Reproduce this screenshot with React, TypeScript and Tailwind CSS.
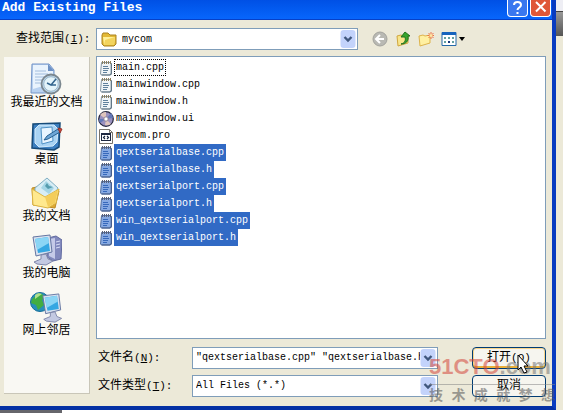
import { useState } from "react";

const mono = "font-['Liberation_Mono','Noto_Sans_CJK_SC',monospace]";

const NoteIcon = ({ selected }: { selected?: boolean }) => (
  <svg viewBox="0 0 16 16" className="w-4 h-4">
    <path d="M3.500 2.500h9l1 1v9.500L12 15H3.500l-1-1z" fill={selected ? "#86a9e2" : "#f0f5f8"} stroke={selected ? "#54709e" : "#8798a4"} />
    <path d="M13.300 3.500v10.500l-1.300 1H3.500" fill="none" stroke={selected ? "#465e8c" : "#5f7484"} strokeWidth="1.200" />
    <path d="M4.500 1v3M6.500 1v3M8.500 1v3M10.500 1v3M12.500 1v3" stroke={selected ? "#5a6178" : "#8c8060"} />
    <path d="M5 6.500h5M5 8.500h6M5 10.500h5M5 12.500h4" stroke={selected ? "#3769bb" : "#5f819d"} />
  </svg>
);

const DiscIcon = () => (
  <svg viewBox="0 0 16 16" className="w-4 h-4">
    <circle cx="8" cy="8" r="7.3" fill="#9a91bf" stroke="#22243b" strokeWidth="1.2" />
    <path d="M8 8 2 4A7 7 0 0 1 8 1zM8 8l5 5a7 7 0 0 1-6 1z" fill="#dfc4bd" />
    <path d="m8 8 5-6a7 7 0 0 1 2 5zM8 8l-6 4a7 7 0 0 1-1-4z" fill="#6378b7" />
    <circle cx="8" cy="8" r="2.2" fill="#fff" stroke="#8e8294" />
  </svg>
);

const ProIcon = () => (
  <svg viewBox="0 0 16 16" className="w-4 h-4">
    <path d="M1.5 1.5h10l3 3v11h-13z" fill="#fff" stroke="#77736b" />
    <path d="M11.500 1.500v3h3" fill="none" stroke="#77736b" />
    <path d="M3 5h10v8H3z" fill="#1d2740" />
    <path d="M4 7h8v5H4z" fill="#fff" />
    <path d="m7 8-1.500 1.500L7 11M9 8l1.500 1.500L9 11" fill="none" stroke="#17243c" strokeWidth="1.2" />
  </svg>
);

const RecentIcon = () => (
  <svg viewBox="0 0 32 32" className="w-8 h-8">
    <path d="M2 1h17l5 6v23H1z" fill="#b8d1f0" stroke="#7495c8" />
    <path d="M3 2h15v6h5v12L3 26z" fill="#e9f3fd" />
    <path d="M18 1v7h6z" fill="#6d91c5" />
    <path d="M5 8h11M5 11h13M5 14h9M5 17h7M5 20h6" stroke="#a2bddd" />
    <circle cx="21" cy="21" r="9.5" fill="#c0dcf0" stroke="#7b878f" strokeWidth="1.8" />
    <circle cx="21" cy="21" r="7.3" fill="#e4f4fa" stroke="#9ab4c7" />
    <path d="m26 16-5 6-4-2M21 22h5" fill="none" stroke="#33658e" strokeWidth="1.5" />
  </svg>
);

const DesktopIcon = () => (
  <svg viewBox="0 0 32 32" className="w-8 h-8">
    <path d="m2 4 27-1-1 24-5 3-22-2z" fill="#3c7fc0" stroke="#174b78" strokeWidth="1.5" />
    <path d="m4 9 4-4h15l4 4-1 13-4 4-14 1-4-4z" fill="#a9d3f3" stroke="#d3ecfb" />
    <path d="m10 8 11-1 1 14-11 3z" fill="#e8f5ff" stroke="#4f91c4" />
    <path d="m16 16 11-7 2 3-12 7-4 1z" fill="#6da6d6" stroke="#276091" />
    <path d="m27 8 4 1-2 4z" fill="#d84637" stroke="#93372f" />
  </svg>
);

const DocumentsIcon = () => (
  <svg viewBox="0 0 32 32" className="w-8 h-8">
    <path d="m2 11 9-2 18 5-4 17-22-3z" fill="#dda831" stroke="#bd8c27" />
    <path d="M5 11 17 1l11 10-8 15L5 20z" fill="#d7edf5" stroke="#80afc3" />
    <path d="m16 4 8 7-5 6-8-6z" fill="#a4d5e5" />
    <path d="m17 6 2 3 4 1-5 2-3-3z" fill="#559cae" />
    <path d="m2 12 13 8 14-8-3 14-8 5-15-3z" fill="#ffe98e" stroke="#dcb544" />
    <path d="m15 20 13-7-3 13-7 4z" fill="#f3cd5b" />
  </svg>
);

const Monitor = () => (
  <>
    <path d="m3 3 17-2 2 17-16 4z" fill="#d8e1ef" stroke="#6475a1" />
    <path d="m5 5 13-2 2 14-12 2z" fill="#35a7e2" />
    <path d="m5 5 13-2 1 6-12 7z" fill="#8bd5f5" />
    <path d="m11 21 5-1 2 5 5 2-7 4-9-1-3-2 7-3z" fill="#c3c9e2" stroke="#8087aa" />
  </>
);

const ComputerIcon = () => (
  <svg viewBox="0 0 32 32" className="w-8 h-8">
    <path d="m18 4 8-2 6 4-1 19-8 2-6-4z" fill="#8289bd" stroke="#626b9f" />
    <path d="m19 5 6-1v21l-6-3z" fill="#c5cae8" />
    <path d="m26 8 4-1M26 11l4-1M26 14l4-1" stroke="#d9def7" />
    <Monitor />
  </svg>
);

const NetworkIcon = () => (
  <svg viewBox="0 0 32 32" className="w-8 h-8">
    <circle cx="10" cy="11" r="9.5" fill="#268fba" stroke="#176e9a" />
    <path d="M2 8 9 2l7 3-4 4 2 5-6 5-2-5-5-2z" fill="#42ad42" />
    <path d="M5 4c2-2 5-2 7-1L5 8z" fill="#b1df8c" />
    <g transform="translate(10 2) scale(.94)">
      <Monitor />
    </g>
  </svg>
);

const FolderIcon = () => (
  <svg viewBox="0 0 16 16" className="w-4 h-4">
    <path d="m1 4 1-2h5l2 2h6v9l-2 2H3l-2-2z" fill="#e3b936" stroke="#aa8221" />
    <path d="M2 6h12l-1 8H3z" fill="#fff19a" />
    <path d="m4 9 10-3-1 8H3z" fill="#f3d45e" />
  </svg>
);

const Chevron = () => (
  <svg viewBox="0 0 15 18" className="w-4 h-full rounded-sm">
    <path d="M0 0h15v18H0z" fill="#c3d3fb" />
    <path d="m4 7 3.5 3.5L11 7" fill="none" stroke="#40577d" strokeWidth="2.4" />
  </svg>
);

// access key shown after a label, e.g. (N):
const Key = ({ k, colon = true }: { k: string; colon?: boolean }) => (
  <span className="text-[11px]">
    (<u>{k}</u>){colon && ":"}
  </span>
);

const places = [
  { name: "我最近的文档", Icon: RecentIcon },
  { name: "桌面", Icon: DesktopIcon },
  { name: "我的文档", Icon: DocumentsIcon },
  { name: "我的电脑", Icon: ComputerIcon },
  { name: "网上邻居", Icon: NetworkIcon },
];

const files = [
  "main.cpp",
  "mainwindow.cpp",
  "mainwindow.h",
  "mainwindow.ui",
  "mycom.pro",
  "qextserialbase.cpp",
  "qextserialbase.h",
  "qextserialport.cpp",
  "qextserialport.h",
  "win_qextserialport.cpp",
  "win_qextserialport.h",
];

const FileIcon = ({ name, selected }: { name: string; selected: boolean }) => {
  if (name.endsWith(".ui")) return <DiscIcon />;
  if (name.endsWith(".pro")) return <ProIcon />;
  return <NoteIcon selected={selected} />;
};

const Toolbar = () => (
  <div className="flex items-center gap-[7px] ml-3.5">
    <button aria-label="Back">
      <svg viewBox="0 0 16 16" className="w-4 h-4">
        <circle cx="8" cy="8" r="7" fill="#b9b9b3" stroke="#a3a39d" />
        <path d="M12 8H5m3-4L4 8l4 4" fill="none" stroke="#fff" strokeWidth="2" />
      </svg>
    </button>
    <button aria-label="Up one level">
      <svg viewBox="0 0 16 16" className="w-4 h-4">
        <path d="m2 5 4-1 2 1 5-1v8L3 15z" fill="#f8e58a" stroke="#d0a63e" />
        <path d="M6 13c4-1 5-4 4-7H6l4-5 5 4h-2c1 5-2 8-7 8z" fill="#35a52d" stroke="#23711d" />
      </svg>
    </button>
    <button aria-label="New folder">
      <svg viewBox="0 0 16 16" className="w-4 h-4">
        <path d="m1 5 4-1 2 1 5-1v8L2 15z" fill="#fff0a2" stroke="#ddb34b" />
        <path d="M13 1v7M9.500 4.500h6.500M10.500 2l5 5M15.500 2l-5 5" stroke="#ed7244" />
        <circle cx="13" cy="4.500" r="1.5" fill="#ffe7a5" />
      </svg>
    </button>
    <button aria-label="Views" className="flex items-center gap-0.5">
      <svg viewBox="0 0 16 16" className="w-4 h-4">
        <path d="M1 1.500h14v13H1z" fill="#fff" stroke="#2469a9" />
        <path d="M1 1h14v3H1z" fill="#1764bd" />
        <path d="M3 6h2v2H3zM7 6h2v2H7zM11 6h2v2h-2zM3 10h2v2H3zM11 10h2v2h-2z" fill="#63a0a0" />
        <path d="M7 10h2v2H7z" fill="#183a7d" />
      </svg>
      <svg viewBox="0 0 6 4" className="w-1.5 h-1">
        <path d="M0 0h6L3 4z" fill="#000" />
      </svg>
    </button>
  </div>
);

const App = () => {
  const [selected, setSelected] = useState<string[]>(files.slice(5));

  const toggle = (name: string) => {
    setSelected((prev) =>
      prev.includes(name) ? prev.filter((f) => f !== name) : [...prev, name]
    );
  };

  return (
    <div className={`relative min-h-screen flex flex-col overflow-hidden bg-white text-black text-xs ${mono}`}>
      <div className="flex">
        <section className="flex-1 min-w-0 bg-[#ece9d8] border-r-4 border-b-4 border-r-[#083bc0] border-b-[#0430a4]">
          <header className="h-5 flex justify-between bg-linear-to-b from-[#0050e5] to-[#0866fc] border-b border-[#0640c8] text-white">
            <h1 className="text-[13px] leading-4 pl-0.5 font-bold whitespace-nowrap">Add Existing Files</h1>
            <div className="flex gap-0.5 pr-px">
              <button aria-label="Help" className="w-[21px] h-[17px] rounded-b-sm border border-t-0 border-white bg-[#3977ef]">
                <svg viewBox="0 0 19 16">
                  <path d="M6 5q0-3 3.500-3T13 5c0 2.500-3.500 2.500-3.500 5M9.500 12v2" fill="none" stroke="#fff" strokeWidth="2" />
                </svg>
              </button>
              <button aria-label="Close" className="w-[21px] h-[17px] rounded-b-sm border border-t-0 border-white bg-[#df5737]">
                <svg viewBox="0 0 19 16">
                  <path d="m5 2 9.500 9.500m0-9.500L5 11.500" stroke="#fff" strokeWidth="2" />
                </svg>
              </button>
            </div>
          </header>

          <div className="flex items-center pl-4 pt-2 pb-1.5">
            <label htmlFor="look-in" className="w-20 whitespace-nowrap">
              查找范围
              <Key k="I" />
            </label>
            <div className="relative flex w-[262px] h-[22px] bg-white border border-[#7f9db9] p-px">
              <span className="absolute left-1 top-0.5">
                <FolderIcon />
              </span>
              <select id="look-in" className="flex-1 appearance-none bg-transparent pl-6 pt-0.5 text-[10px] outline-none">
                <option>mycom</option>
              </select>
              <span className="pointer-events-none">
                <Chevron />
              </span>
            </div>
            <Toolbar />
          </div>

          <div className="flex gap-1.5 pl-1 pr-1.5">
            <nav className="w-[86px] h-[337px] mt-px flex flex-col items-center gap-[9px] pt-1.5 bg-[#f9f8f3] border-r border-b border-[#c9c6b8]">
              {places.map(({ name, Icon }) => (
                <button key={name} className="flex flex-col items-center leading-4 whitespace-nowrap">
                  <Icon />
                  {name}
                </button>
              ))}
            </nav>

            <div className="flex-1 min-w-0">
              <ul className="h-[283px] bg-white border border-[#7f9db9] pt-0.5 pl-px text-[10px]">
                {files.map((name) => (
                  <li key={name}>
                    <button onClick={() => toggle(name)} className="flex items-center h-[17px]">
                      <FileIcon name={name} selected={selected.includes(name)} />
                      <span
                        className={`h-[17px] px-0.5 leading-[17px] ${
                          selected.includes(name) ? "bg-[#316ac5] text-white" : ""
                        } ${name === "main.cpp" ? "outline-1 -outline-offset-1 outline-dotted outline-black" : ""}`}
                      >
                        {name}
                      </span>
                    </button>
                  </li>
                ))}
              </ul>

              <div className="flex justify-between pt-2 pl-0.5 pb-[9px]">
                <div className="flex flex-col gap-1.5">
                  <div className="flex items-center">
                    <label htmlFor="file-name" className="w-[94px]">
                      文件名
                      <Key k="N" />
                    </label>
                    <div className="flex w-[246px] h-[22px] bg-white border border-[#7f9db9] p-px">
                      <input
                        id="file-name"
                        defaultValue={'"qextserialbase.cpp" "qextserialbase.h" "qextserialport.cpp"'}
                        className="flex-1 min-w-0 pl-0.5 text-[10px] outline-none"
                      />
                      <button aria-label="File names">
                        <Chevron />
                      </button>
                    </div>
                  </div>
                  <div className="flex items-center">
                    <label htmlFor="file-type" className="w-[94px]">
                      文件类型
                      <Key k="T" />
                    </label>
                    <div className="flex w-[246px] h-[22px] bg-white border border-[#7f9db9] p-px">
                      <select id="file-type" className="flex-1 appearance-none pl-0.5 text-[10px] outline-none">
                        <option>All Files (*.*)</option>
                      </select>
                      <span className="pointer-events-none">
                        <Chevron />
                      </span>
                    </div>
                  </div>
                </div>
                <div className="flex flex-col gap-1.5">
                  <button className="w-[74px] h-[22px] rounded-sm border border-[#003c74] bg-[#f6f5ef] shadow-[inset_0_-2px_0_#e9b03c,inset_0_0_0_1px_#f8d48a]">
                    打开
                    <Key k="O" colon={false} />
                  </button>
                  <button className="w-[74px] h-[22px] rounded-sm border border-[#003c74] bg-[#f6f5ef]">取消</button>
                </div>
              </div>
            </div>
          </div>
        </section>
        <aside className="w-[7px] bg-[#ece9d8]">
          <div className="h-3 bg-[#eeeef4] border-b border-[#444]" />
          <div className="h-6 bg-linear-to-b from-[#999] to-[#555]" />
        </aside>
      </div>
      <footer className="flex flex-1">
        <div className="w-[62px] bg-[#66666b]" />
      </footer>

      <div className="absolute right-2 top-[350px] w-[126px] pointer-events-none opacity-55 font-['Liberation_Sans','Noto_Sans_CJK_SC',sans-serif] font-bold">
        <div className="text-[22px] leading-[34px] whitespace-nowrap text-[#777]">
          <span className="text-[#d4473d]">51CTO</span>.com
        </div>
        <div className="flex justify-between border-t border-[#888] text-sm text-[#555]">
          {[..."技术成就梦想"].map((c) => (
            <span key={c}>{c}</span>
          ))}
        </div>
      </div>
      <svg viewBox="0 0 12 20" className="absolute left-[517px] top-[354px] w-3 h-5 pointer-events-none">
        <path d="M1 1v15l3-3 3 6 3-1-3-6h4z" fill="#fff" stroke="#000" />
      </svg>
    </div>
  );
};

export default App;
